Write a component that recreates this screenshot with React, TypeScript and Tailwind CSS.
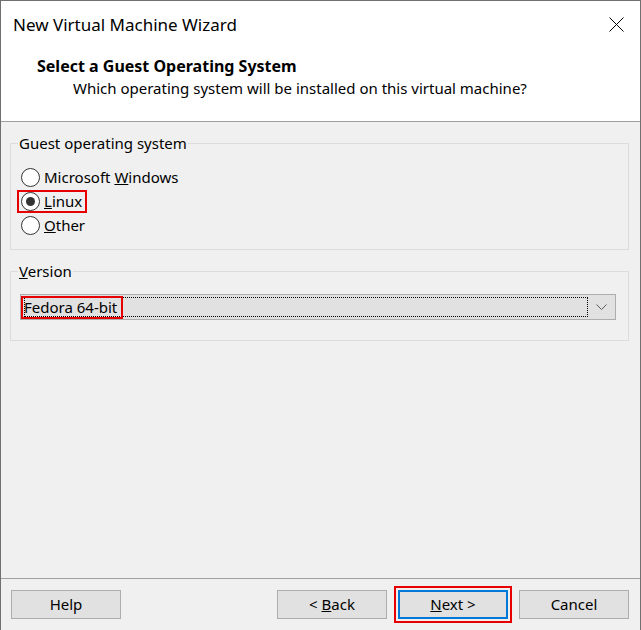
export default function App() {
  return (
    <div className="w-[641px] h-[630px] bg-[#f0f0f0] border-x border-t border-[#707070] flex flex-col text-black font-['Noto_Sans',sans-serif] text-[15px]">
      {/* title + page header */}
      <div className="bg-white h-[121px] border-b border-[#a0a0a0] flex flex-col shrink-0">
        <div className="h-[47px] flex items-center justify-between pl-[12px] pr-[16px]">
          <span className="text-[17px]">New Virtual Machine Wizard</span>
          <svg width="15" height="15" viewBox="0 0 15 15" fill="none" stroke="#000" strokeWidth="1">
            <line x1="0.5" y1="0.5" x2="14.5" y2="14.5" />
            <line x1="14.5" y1="0.5" x2="0.5" y2="14.5" />
          </svg>
        </div>
        <div className="pl-[36px] mt-[8px] font-bold text-[16px] leading-[20px]">Select a Guest Operating System</div>
        <div className="pl-[72px] leading-[20px] mt-[2px]">Which operating system will be installed on this virtual machine?</div>
      </div>

      <fieldset className="mt-[11px] ml-[9px] mr-[11px] border border-[#dcdcdc] pt-[12px] pb-[12px]">
        <legend className="ml-[7px] px-[1px] leading-[20px]">Guest operating system</legend>
        <RadioRow label={<>Microsoft <span className="underline">W</span>indows</>} />
        <RadioRow checked highlight label={<><span className="underline">L</span>inux</>} />
        <RadioRow label={<><span className="underline">O</span>ther</>} />
      </fieldset>

      <fieldset className="mt-[11px] ml-[9px] mr-[11px] border border-[#dcdcdc] pt-[13px] pb-[20px]">
        <legend className="ml-[7px] px-[1px] leading-[20px]">
          <span className="underline">V</span>ersion
        </legend>
        <div className="ml-[9px] mr-[12px] h-[26px] bg-[#e1e1e1] border border-[#adadad] flex items-center">
          <div className="ml-[3px] h-[20px] flex-1 border border-dotted border-black flex items-center">
            <span className="inline-flex items-center h-[19px] -ml-[2px] pl-[1px] pr-[4px] outline-2 outline-[#e60000] leading-[19px]">
              Fedora 64-bit
            </span>
          </div>
          <div className="w-[27px] flex justify-center">
            <svg width="11" height="6" viewBox="0 0 11 6" fill="none" stroke="#5a5a5a" strokeWidth="1">
              <polyline points="0.5,0.5 5.5,5.5 10.5,0.5" />
            </svg>
          </div>
        </div>
      </fieldset>

      <div className="flex-1" />

      <div className="h-[52px] border-t border-[#a0a0a0] flex items-start pt-[11px] pl-[10px] pr-[11px]">
        <button className="w-[110px] h-[29px] bg-[#e1e1e1] border border-[#adadad]">Help</button>
        <div className="ml-auto flex gap-[11px]">
          <button className="w-[110px] h-[29px] bg-[#e1e1e1] border border-[#adadad]">
            &lt; <span className="underline">B</span>ack
          </button>
          <button className="w-[110px] h-[29px] bg-[#e1e1e1] border-2 border-[#0078d7] outline-2 outline-offset-2 outline-[#e60000]">
            <span className="underline">N</span>ext &gt;
          </button>
          <button className="w-[110px] h-[29px] bg-[#e1e1e1] border border-[#adadad]">Cancel</button>
        </div>
      </div>
    </div>
  )
}

function RadioRow({ label, checked, highlight }: { label: React.ReactNode; checked?: boolean; highlight?: boolean }) {
  return (
    <div className="h-[24px] flex items-center pl-[8px]">
      <span
        className={
          'inline-flex items-center h-[19px] pl-[2px] pr-[3px] gap-[4px] ' +
          (highlight ? 'outline-2 outline-[#e60000]' : '')
        }
      >
        <span className="w-[19px] h-[19px] rounded-full border border-[#333] bg-white flex items-center justify-center">
          {checked && <span className="w-[9px] h-[9px] rounded-full bg-[#333]" />}
        </span>
        <span className="leading-[19px]">{label}</span>
      </span>
    </div>
  )
}
